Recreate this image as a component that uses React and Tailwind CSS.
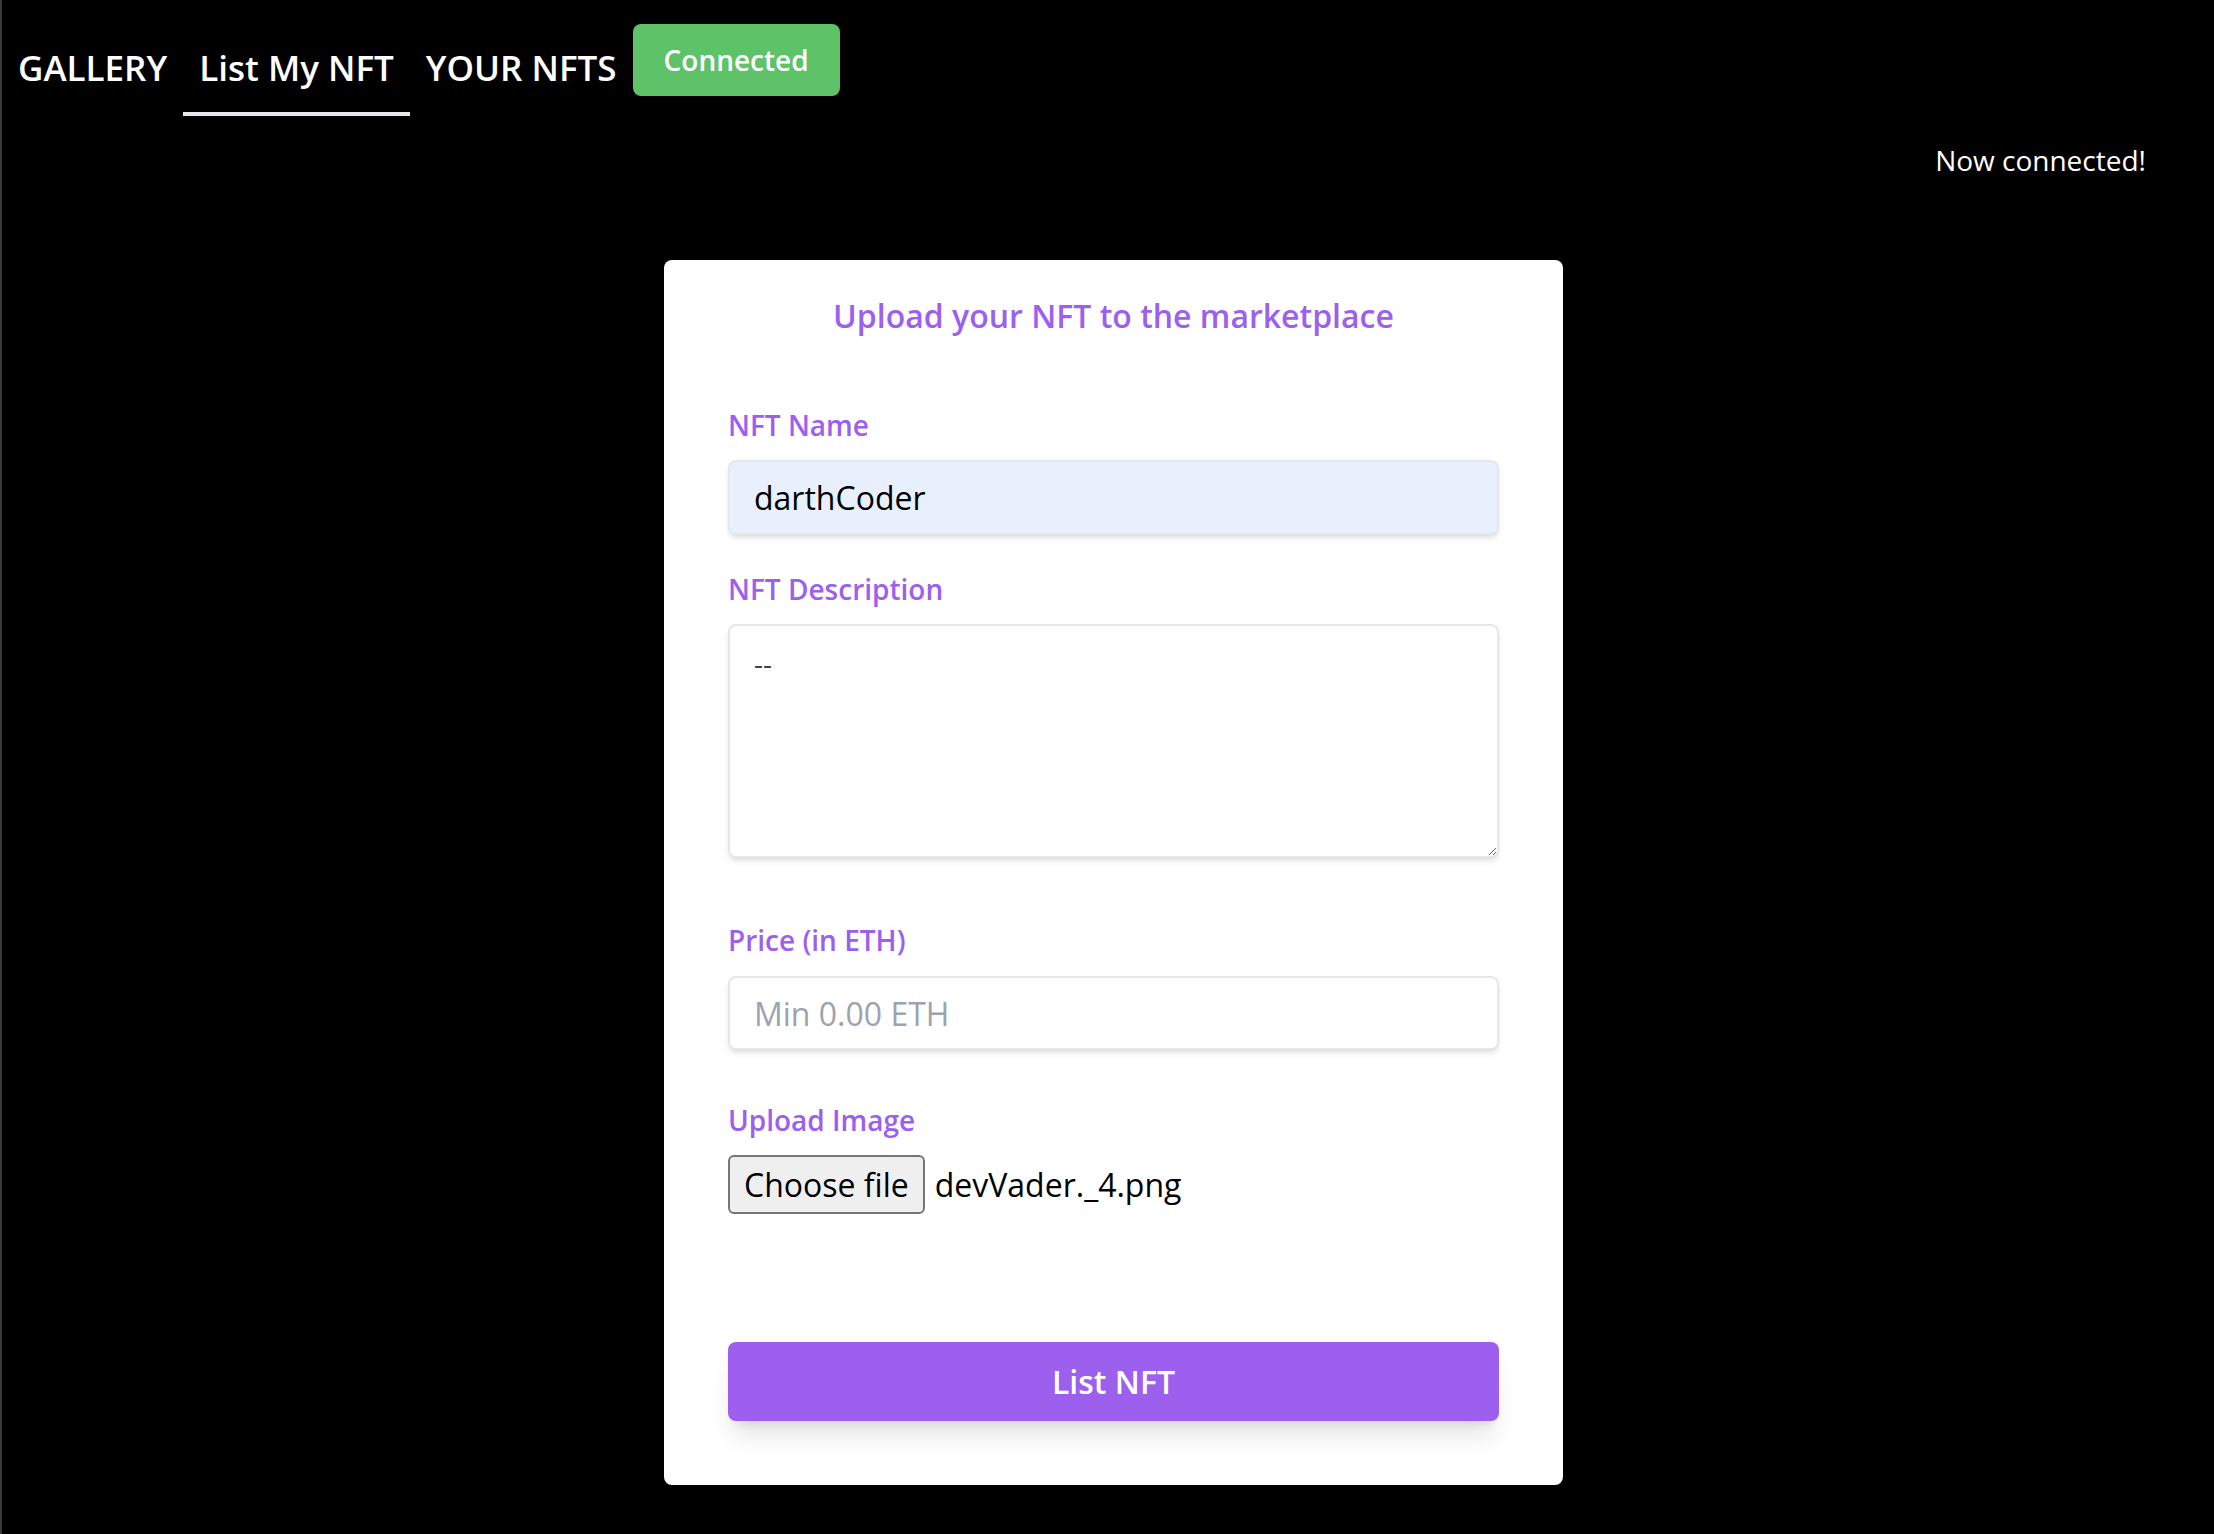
import React from "react";

const navItems = [
  { label: "GALLERY", active: false },
  { label: "List My NFT", active: true },
  { label: "YOUR NFTS", active: false },
];

const Label = ({ children, className = "" }) => (
  <label
    className={`block text-[28px] leading-[42px] font-semibold text-[#9c5fee] ${className}`}
  >
    {children}
  </label>
);

const App = () => {
  return (
    <div className="min-h-screen bg-black border-l-2 border-[#3a3a3a] font-['Open_Sans',sans-serif] text-white">
      {/* top nav */}
      <nav className="flex items-start">
        {navItems.map(({ label, active }) => (
          <a
            key={label}
            href="#"
            className={
              active
                ? "px-4 pt-[41px] pb-[17px] text-[35px] leading-[54px] font-semibold border-b-4 border-[#e5e7eb]"
                : "px-4 pt-[41px] pb-[17px] text-[35px] leading-[54px] font-semibold border-b-4 border-transparent"
            }
          >
            {label}
          </a>
        ))}
        <button className="mt-6 w-[207px] h-[72px] rounded-lg bg-[#5ec269] text-white text-[28px] font-semibold leading-none">
          Connected
        </button>
      </nav>

      <div className="flex justify-end pr-[68px] mt-[22px]">
        <span className="text-[28px] leading-[45px]">Now connected!</span>
      </div>

      {/* upload form */}
      <div className="flex justify-center pl-[11px] mt-[77px] pb-[47px]">
        <form className="w-[899px] bg-white rounded-lg px-16 pt-[29px] pb-16">
          <h3 className="text-center text-[32px] leading-[54px] font-semibold text-[#9c5fee]">
            Upload your NFT to the marketplace
          </h3>

          <Label className="mt-[61px]">NFT Name</Label>
          <input
            type="text"
            defaultValue="darthCoder"
            className="mt-[14px] w-full h-[75px] px-6 text-[32px] text-black bg-[#e8f0fe] border-2 border-[#e5e7eb] rounded-lg shadow-md outline-none"
          />

          <Label className="mt-[33px]">NFT Description</Label>
          <textarea
            defaultValue="--"
            className="block mt-[14px] w-full h-[234px] px-6 py-4 text-[28px] leading-[42px] text-[#374151] bg-white border-2 border-[#e5e7eb] rounded-lg shadow-md outline-none"
          />

          <Label className="mt-[61px]">Price (in ETH)</Label>
          <input
            type="number"
            placeholder="Min 0.00 ETH"
            className="mt-[15px] w-full h-[74px] px-6 text-[32px] text-black placeholder:text-[#9ca3af] bg-white border-2 border-[#e5e7eb] rounded-lg shadow-md outline-none"
          />

          <Label className="mt-[49px]">Upload Image</Label>
          <div className="mt-[14px] flex items-center gap-[10px]">
            <span className="h-[59px] px-[14px] flex items-center bg-[#efefef] border-2 border-[#767676] rounded-md text-[32px] text-black">
              Choose file
            </span>
            <span className="text-[32px] text-black">devVader._4.png</span>
          </div>

          <button
            type="button"
            className="mt-[128px] w-full h-[79px] rounded-lg bg-[#9c5fee] text-white text-[32px] font-semibold shadow-xl"
          >
            List NFT
          </button>
        </form>
      </div>
    </div>
  );
};

export default App;
